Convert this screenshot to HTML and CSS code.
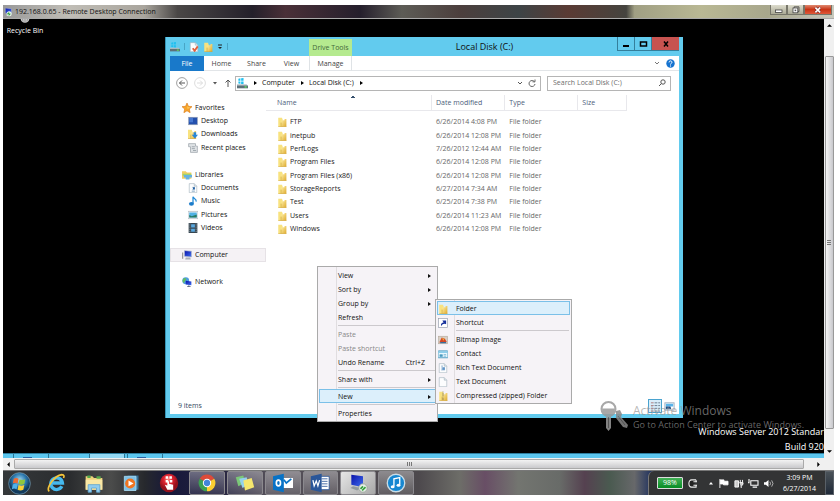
FILE: index.html
```html
<!DOCTYPE html>
<html lang="en">
<head>
    <meta charset="UTF-8">
    <meta name="viewport" content="width=device-width, initial-scale=1.0">
    <title>192.168.0.65 - Remote Desktop Connection</title>
    <link rel="stylesheet" href="styles.css">
</head>
<body>
    <!-- Shared icons -->
    <svg class="defs" aria-hidden="true">
        <defs>
            <linearGradient id="gold" x2="1" y2="1"><stop stop-color="#fff0a8"/><stop offset="1" stop-color="#dda92c"/></linearGradient>
            <radialGradient id="orb" cx=".5" cy=".35"><stop stop-color="#a8dcf2"/><stop offset=".6" stop-color="#2c79ae"/><stop offset="1" stop-color="#123a5c"/></radialGradient>
            <radialGradient id="redball" cx=".45" cy=".3"><stop stop-color="#ff8a80"/><stop offset=".5" stop-color="#dd2230"/><stop offset="1" stop-color="#96101c"/></radialGradient>
            <linearGradient id="screen" x2="1" y2="1"><stop stop-color="#0a12a8"/><stop offset="1" stop-color="#3f6df0"/></linearGradient>
            <symbol id="folder" viewBox="0 0 16 16">
                <path d="M2 1h6l1 3v11.500H2z" fill="#f8e27f"/><path d="M7.500 5H12V3h3v12.500H7.500z" fill="url(#gold)"/><path d="M6.500 9v6.500" stroke="#c79d38"/><path d="M2 15.500h13" stroke="#d1a437"/>
            </symbol>
            <symbol id="drive" viewBox="0 0 16 16">
                <path d="M2 1l3-.5V4H2zM6 .4L9.500 0v4H6zM2 5h3v3.500L2 8zM6 5h3.500v4L6 8.600z" fill="#20c0f0"/><path d="M0 9h14l2 3H0z" fill="#b7c3ca"/><path d="M0 11h16v4H0z" fill="#5e7078"/><path d="M11 13h3" stroke="#5fe05f" stroke-width="2"/>
            </symbol>
            <symbol id="page" viewBox="0 0 16 16">
                <path d="M2 1h8l4 4v10.500H2z" fill="#fcfdfe" stroke="#a5b3bf"/><path d="M10 1v4h4" fill="#dde5eb" stroke="#a5b3bf"/>
            </symbol>
            <symbol id="monitor" viewBox="0 0 16 16">
                <path d="M1 4v10" stroke="#999" stroke-width="2"/><path d="M4 1l11 1v9L4 10z" fill="url(#screen)" stroke="#a9b3c8"/><path d="M6 12h7l1 3H5z" fill="#aab0b8"/>
            </symbol>
        </defs>
    </svg>

    <div class="host">
        <header class="host-title">
            <svg class="icon" viewBox="0 0 16 16"><use href="#monitor"/><circle cx="11" cy="11" r="4.500" fill="#e8f3e8"/><path d="M8 12l3-3M10 14l3-3" stroke="#279b36" stroke-width="2"/></svg>
            <span class="host-name">192.168.0.65 - Remote Desktop Connection</span>
            <div class="host-buttons">
                <button type="button" aria-label="Minimize"><svg viewBox="0 0 12 10"><rect x="2" y="5" width="8" height="3" fill="#fff" stroke="#444"/></svg></button>
                <button type="button" aria-label="Restore"><svg viewBox="0 0 12 10"><path d="M4 3V1h6v6H8" fill="none" stroke="#444"/><rect x="2.500" y="2.500" width="6" height="6" fill="#fff" stroke="#444"/><rect x="4.500" y="4.500" width="2" height="2" fill="#555"/></svg></button>
                <button type="button" class="host-close" aria-label="Close"><svg viewBox="0 0 12 10"><path d="M3 2l6 6M9 2L3 8" stroke="#722" stroke-width="3.500"/><path d="M3 2l6 6M9 2L3 8" stroke="#fff" stroke-width="2"/></svg></button>
            </div>
        </header>

        <div class="host-view">
            <main class="desktop">
                <div class="recycle">
                    <svg viewBox="0 0 20 8"><path d="M3 0h14c-1 4-3 6-7 6S4 4 3 0z" fill="#ccc"/><path d="M6 0l1 4M10 0v5M14 0l-1 4" stroke="#777"/></svg>
                    <span>Recycle Bin</span>
                </div>

                <!-- Explorer window -->
                <section class="window">
                    <div class="title-row">
                        <div class="quick">
                            <svg class="icon" viewBox="0 0 16 16"><use href="#drive"/></svg>
                            <i class="bar"></i>
                            <svg class="icon" viewBox="0 0 16 16"><use href="#page"/><path d="M6 10l3 4 5-7" fill="none" stroke="#e2603c" stroke-width="3"/></svg>
                            <svg class="icon" viewBox="0 0 16 16"><use href="#folder"/></svg>
                            <svg class="tiny" viewBox="0 0 6 6"><path d="M1 1h4" stroke="#222"/><path d="M1 3h4L3 5z" fill="#222"/></svg>
                            <i class="bar"></i>
                        </div>
                        <span class="drive-tools">Drive Tools</span>
                        <h1>Local Disk (C:)</h1>
                        <div class="win-buttons">
                            <button type="button" aria-label="Minimize"><svg viewBox="0 0 12 12"><path d="M3 8h6" stroke="#000" stroke-width="2"/></svg></button>
                            <button type="button" aria-label="Maximize"><svg viewBox="0 0 12 12"><rect x="3.500" y="4" width="6" height="4" fill="none" stroke="#000" stroke-width="1.500"/></svg></button>
                            <button type="button" class="win-close" aria-label="Close"><svg viewBox="0 0 12 12"><path d="M4 3.500l4 5M8 3.500l-4 5" stroke="#000" stroke-width="1.500"/></svg></button>
                        </div>
                    </div>

                    <nav class="tabs">
                        <button type="button" class="file">File</button>
                        <button type="button">Home</button>
                        <button type="button">Share</button>
                        <button type="button">View</button>
                        <button type="button" class="manage">Manage</button>
                        <span class="grow"></span>
                        <svg class="tiny" viewBox="0 0 6 6"><path d="M1 2l2 2 2-2" fill="none" stroke="#777"/></svg>
                        <svg class="help" viewBox="0 0 10 10"><circle cx="5" cy="5" r="4.700" fill="#1673cf"/><path d="M3.400 3.800c0-2.300 3.400-2.100 3.200 0C6.500 4.800 5 4.800 5 6.200M5 7.200v1.200" fill="none" stroke="#fff" stroke-width="1.100"/></svg>
                    </nav>

                    <div class="address-row">
                        <svg class="round" viewBox="0 0 12 12"><circle cx="6" cy="6" r="5.400" fill="#fff" stroke="#888" stroke-width=".8"/><path d="M9 6H3.500M6 3.500L3.500 6 6 8.500" fill="none" stroke="#555"/></svg>
                        <svg class="round" viewBox="0 0 12 12"><circle cx="6" cy="6" r="5.400" fill="#fff" stroke="#ddd"/><path d="M3 6h5.500M6 3.500L8.500 6 6 8.500" fill="none" stroke="#ddd"/></svg>
                        <svg class="tiny" viewBox="0 0 6 6"><path d="M1 2h4L3 4.500z" fill="#555"/></svg>
                        <svg class="up" viewBox="0 0 8 10"><path d="M4 9V2M1.500 4.500L4 2l2.500 2.500" fill="none" stroke="#555"/></svg>
                        <div class="address">
                            <svg class="icon" viewBox="0 0 16 16"><use href="#drive"/></svg>
                            <svg class="tri" viewBox="0 0 4 6"><path d="M1 1l3 2-3 2z"/></svg>
                            <a href="#">Computer</a>
                            <svg class="tri" viewBox="0 0 4 6"><path d="M1 1l3 2-3 2z"/></svg>
                            <a href="#">Local Disk (C:)</a>
                            <svg class="tri" viewBox="0 0 4 6"><path d="M1 1l3 2-3 2z"/></svg>
                            <span class="grow"></span>
                            <svg class="tiny" viewBox="0 0 6 6"><path d="M1 2l2 2 2-2" fill="none" stroke="#555"/></svg>
                            <svg class="up" viewBox="0 0 8 10"><path d="M6.500 3.800A3 3 0 1 0 7 6M4.500 3.800H7V1.500" fill="none" stroke="#666"/></svg>
                        </div>
                        <label class="search">
                            <input type="text" placeholder="Search Local Disk (C:)" aria-label="Search Local Disk (C:)">
                            <svg class="up" viewBox="0 0 8 10"><circle cx="5" cy="4" r="2.200" fill="none" stroke="#555"/><path d="M3.500 5.500L1 8" stroke="#555"/></svg>
                        </label>
                    </div>

                    <div class="content">
                        <ul class="tree">
                            <li><a href="#"><svg class="icon" viewBox="0 0 16 16"><path d="M8 0l2.300 5.300 5.700.500-4.300 3.800L13 15.500 8 12.400 3 15.500l1.300-5.900L0 5.800l5.700-.500z" fill="#f8a52a" stroke="#d97a18"/><path d="M8 3l1.300 4H13L9 9z" fill="#ffdf7a"/></svg>Favorites</a></li>
                            <li><a class="sub" href="#"><svg class="icon" viewBox="0 0 16 16"><rect x="1" y="2" width="14" height="12" fill="#2450ad" stroke="#95a0b4"/><path d="M2 3h6v7H2z" fill="#4778d1"/></svg>Desktop</a></li>
                            <li><a class="sub" href="#"><svg class="icon" viewBox="0 0 16 16"><use href="#folder" x="-2"/><path d="M9 5h4v4h3l-5 6-5-6h3z" fill="#2786d8"/></svg>Downloads</a></li>
                            <li><a class="sub" href="#"><svg class="icon" viewBox="0 0 16 16"><path d="M1 1h11v4h3v10H4V6H1z" fill="#dfe3e6" stroke="#8e979e"/><path d="M6 6h5M6 9h5M8 12h5" stroke="#7d8890"/></svg>Recent places</a></li>
                            <li class="gap" aria-hidden="true"></li>
                            <li><a href="#"><svg class="icon" viewBox="0 0 16 16"><path d="M0 2h6l2 2h7v10H0z" fill="#f1ce62"/><path d="M1 6h14v3H1z" fill="#9cd36d"/><path d="M3 8h13v4H12v3H6v-3H3z" fill="#65b2e2"/></svg>Libraries</a></li>
                            <li><a class="sub" href="#"><svg class="icon" viewBox="0 0 16 16"><use href="#page"/><path d="M7 7h4M7 10h4M6 13h5" stroke="#3a6ea0"/><rect x="8" y="7" width="3" height="3" fill="#225fa3"/></svg>Documents</a></li>
                            <li><a class="sub" href="#"><svg class="icon" viewBox="0 0 16 16"><path d="M8 12V1c1 4 6 3 5 8" fill="none" stroke="#248bd8" stroke-width="2"/><ellipse cx="5.500" cy="12.500" rx="4" ry="3" fill="#1c7cca"/></svg>Music</a></li>
                            <li><a class="sub" href="#"><svg class="icon" viewBox="0 0 16 16"><rect x="0" y="2" width="16" height="12" fill="#eef3f6" stroke="#a9b4bb"/><path d="M2 4h12v8H2z" fill="#4fb1e4"/><path d="M2 8l4 2 8-3v5H2z" fill="#277b65"/></svg>Pictures</a></li>
                            <li><a class="sub" href="#"><svg class="icon" viewBox="0 0 16 16"><path d="M1 0h14v16H1z" fill="#374650"/><path d="M5 2h6v5H5zM5 9h6v5H5z" fill="#59a8df"/><path d="M3 1v14M13 1v14" stroke="#ccd6dc" stroke-dasharray="1.500"/></svg>Videos</a></li>
                            <li class="gap" aria-hidden="true"></li>
                            <li class="current"><a href="#"><svg class="icon" viewBox="0 0 16 16"><use href="#monitor"/></svg>Computer</a></li>
                            <li class="gap" aria-hidden="true"></li>
                            <li><a href="#"><svg class="icon" viewBox="0 0 16 16"><circle cx="6" cy="6" r="5.500" fill="#4f9de0"/><path d="M2 3c3-3 6 0 4 2S4 8 3 10C1 8 0 5 2 3z" fill="#62bd61"/><path d="M6 6l9 1v6l-9-1z" fill="url(#screen)"/><path d="M11 13v3M8 15.500h6" stroke="#235"/></svg>Network</a></li>
                        </ul>

                        <table class="files">
                            <thead>
                                <tr><th class="name">Name</th><th class="date">Date modified</th><th class="type">Type</th><th class="size">Size</th><th class="rest"></th></tr>
                            </thead>
                            <tbody>
                                <tr><td><svg class="icon"><use href="#folder"/></svg>FTP</td><td>6/26/2014 4:08 PM</td><td>File folder</td><td></td><td></td></tr>
                                <tr><td><svg class="icon"><use href="#folder"/></svg>inetpub</td><td>6/26/2014 12:08 PM</td><td>File folder</td><td></td><td></td></tr>
                                <tr><td><svg class="icon"><use href="#folder"/></svg>PerfLogs</td><td>7/26/2012 12:44 AM</td><td>File folder</td><td></td><td></td></tr>
                                <tr><td><svg class="icon"><use href="#folder"/></svg>Program Files</td><td>6/26/2014 12:08 PM</td><td>File folder</td><td></td><td></td></tr>
                                <tr><td><svg class="icon"><use href="#folder"/></svg>Program Files (x86)</td><td>6/26/2014 12:08 PM</td><td>File folder</td><td></td><td></td></tr>
                                <tr><td><svg class="icon"><use href="#folder"/></svg>StorageReports</td><td>6/27/2014 7:34 AM</td><td>File folder</td><td></td><td></td></tr>
                                <tr><td><svg class="icon"><use href="#folder"/></svg>Test</td><td>6/25/2014 7:38 PM</td><td>File folder</td><td></td><td></td></tr>
                                <tr><td><svg class="icon"><use href="#folder"/></svg>Users</td><td>6/26/2014 11:23 AM</td><td>File folder</td><td></td><td></td></tr>
                                <tr><td><svg class="icon"><use href="#folder"/></svg>Windows</td><td>6/26/2014 12:08 PM</td><td>File folder</td><td></td><td></td></tr>
                            </tbody>
                        </table>
                    </div>

                    <footer class="status">
                        <span>9 items</span>
                        <button type="button" class="view on" aria-label="Details"><svg viewBox="0 0 12 12"><path d="M1 2h3M1 5h3M1 8h3M1 11h3" stroke="#a77"/><path d="M5 2h3M9 2h2M5 5h3M9 5h2M5 8h3M9 8h2M5 11h3M9 11h2" stroke="#678"/></svg></button>
                        <button type="button" class="view" aria-label="Large icons"><svg viewBox="0 0 12 12"><rect x="1" y="2" width="10" height="8" fill="#fff" stroke="#9ab"/><path d="M2 3h8v3H2z" fill="#59b4ea"/><path d="M2 6h5l1 3H2z" fill="#1f4b83"/></svg></button>
                    </footer>
                </section>

                <!-- Context menus -->
                <div class="menu menu-main">
                    <button type="button">View<b></b></button>
                    <button type="button">Sort by<b></b></button>
                    <button type="button">Group by<b></b></button>
                    <button type="button">Refresh</button>
                    <hr>
                    <button type="button" disabled>Paste</button>
                    <button type="button" disabled>Paste shortcut</button>
                    <button type="button">Undo Rename<kbd>Ctrl+Z</kbd></button>
                    <hr>
                    <button type="button">Share with<b></b></button>
                    <hr>
                    <button type="button" class="hot">New<b></b></button>
                    <hr>
                    <button type="button">Properties</button>
                </div>
                <div class="menu menu-new">
                    <button type="button" class="hot"><svg class="icon"><use href="#folder"/></svg>Folder</button>
                    <button type="button"><svg class="icon" viewBox="0 0 16 16"><rect x="1" y="1" width="14" height="14" fill="#fff" stroke="#8f98a8"/><path d="M5 13c-1-4 1-6 4-6L7 4h6v6l-2-1c-3 0-4 1-6 4z" fill="#16309c"/></svg>Shortcut</button>
                    <hr>
                    <button type="button"><svg class="icon" viewBox="0 0 16 16"><rect x="1" y="2" width="14" height="12" fill="#d8d0c5" stroke="#b5a89a"/><path d="M2 12l4-8 5 2 3 5z" fill="#d44625"/><path d="M4 11h9v2H3z" fill="#396d9d"/><path d="M6 5l4 1-1 3z" fill="#f0b43c"/></svg>Bitmap image</button>
                    <button type="button"><svg class="icon" viewBox="0 0 16 16"><rect y="3" width="16" height="11" rx="1" fill="#e8f7fd" stroke="#4c9bc0" stroke-width="1.500"/><path d="M1 5h14" stroke="#6fc1e4" stroke-width="2"/><path d="M3 9h4v3H3zM9 9h4M9 11.500h4" fill="#4a9bc2" stroke="#4a9bc2"/></svg>Contact</button>
                    <button type="button"><svg class="icon" viewBox="0 0 16 16"><use href="#page"/><path d="M5 5h3M5 8h6M5 11h6" stroke="#5787b8"/><rect x="7" y="7" width="4" height="4" fill="#6094c7"/></svg>Rich Text Document</button>
                    <button type="button"><svg class="icon"><use href="#page"/></svg>Text Document</button>
                    <button type="button"><svg class="icon" viewBox="0 0 16 16"><use href="#folder"/><path d="M8 1v14" stroke="#6d6142" stroke-width="2" stroke-dasharray="1"/></svg>Compressed (zipped) Folder</button>
                </div>

                <div class="activate">
                    <svg viewBox="0 0 28 30"><circle cx="8.500" cy="8" r="7" fill="none" stroke="#999" stroke-width="2"/><path d="M2 7.500h13c0 4-2 6-4 7V27l-2.500 3L6 27V14.500c-2-1-4-3-4-7z" fill="#999"/><path d="M16 10l4-1 2 4-1 3 7 8-1 3-4-1-7-9v-3z" fill="#888"/><path d="M8.500 16v11M18 15l7 9" stroke="#555" stroke-width=".8"/></svg>
                    <div>
                        <p class="activate-head">Activate Windows</p>
                        <p>Go to Action Center to activate Windows.</p>
                    </div>
                </div>
                <div class="edition">
                    <p>Windows Server 2012 Standar</p>
                    <p>Build 920</p>
                </div>
                <div class="remote-taskbar"><i></i><i></i><i></i><i></i></div>
            </main>

            <div class="vscroll">
                <svg class="tri" viewBox="0 0 6 4"><path d="M0 4l3-3 3 3z"/></svg>
                <i class="thumb"></i>
                <svg class="tri" viewBox="0 0 6 4"><path d="M0 0l3 3 3-3z"/></svg>
            </div>
        </div>

        <div class="hscroll">
            <svg class="tri" viewBox="0 0 4 6"><path d="M4 0L1 3l3 3z"/></svg>
            <i class="thumb"></i>
            <svg class="tri" viewBox="0 0 4 6"><path d="M0 0l3 3-3 3z"/></svg>
        </div>

        <!-- Local taskbar -->
        <footer class="taskbar">
            <div class="apps">
                <button type="button" aria-label="Start"><svg viewBox="0 0 24 24"><circle cx="12" cy="12" r="11.300" fill="url(#orb)" stroke="#7fa5b8" stroke-width=".7"/><path d="M6 7c2-1 3-1 5 0l-1 5c-2-1-3-1-5 0z" fill="#ef6b33"/><path d="M12 7.500c2 1 4 1 6 0l-1 5c-2 1-4 1-6 0z" fill="#8fc63d"/><path d="M5 13c2-1 3-1 5 0l-1 5c-2-1-3-1-5 0z" fill="#4fb1ea"/><path d="M11 13.500c2 1 4 1 6 0l-1 5c-2 1-4 1-6 0z" fill="#fcd035"/></svg></button>
                <button type="button" aria-label="Internet Explorer"><svg viewBox="0 0 24 24"><path d="M19 16a7 7 0 1 1 .7-4H7" fill="none" stroke="#45b9ee" stroke-width="4"/><path d="M4 22c-5-3 6-19 15-20 3 0 3 2 2 4" fill="none" stroke="#f5c53a" stroke-width="2"/></svg></button>
                <button type="button" aria-label="Windows Explorer"><svg viewBox="0 0 24 24"><path d="M2 4h8l2 2h10v14H2z" fill="#efd27c"/><path d="M4 3h4v3H4zM15 4h5v3h-5z" fill="#54a94b"/><path d="M2 8h20v12H2z" fill="#fae8a5"/><path d="M5 23v-9h14v9h-4v-5H9v5z" fill="#91cdef" stroke="#5ea4d0"/></svg></button>
                <button type="button" aria-label="Media Player"><svg viewBox="0 0 24 24"><path d="M8 3h13v17H8z" fill="#366f95"/><path d="M4 4h14v17H4z" fill="#7fc2e8" stroke="#a9dcf4"/><circle cx="11" cy="12.500" r="6" fill="#ef7420"/><path d="M9 9l6 3.500L9 16z" fill="#fff"/></svg></button>
                <button type="button" aria-label="Touch"><svg viewBox="0 0 24 24"><circle cx="12" cy="12" r="11" fill="url(#redball)"/><path d="M8 4h3v3H8zM12.500 4h3v3h-3zM8 8.500h3v3H8zM13 8.500h3v3h-3z" fill="#fff"/><path d="M10 20l-3-6 3 1v-5h2v3l5 1v6z" fill="#fff"/></svg></button>
                <button type="button" class="open" aria-label="Chrome"><svg viewBox="0 0 24 24"><path d="M12 12L3.300 7A10 10 0 0 1 20.700 7z" fill="#dd4b39"/><path d="M12 12l8.700-5A10 10 0 0 1 12 22z" fill="#fccf31"/><path d="M12 12v10A10 10 0 0 1 3.300 7z" fill="#3ca151"/><circle cx="12" cy="12" r="5" fill="#fff"/><circle cx="12" cy="12" r="3.800" fill="#4285d8"/></svg></button>
                <button type="button" class="open" aria-label="Sticky Notes"><svg viewBox="0 0 24 24"><path d="M1 5l9-2 2 9-8 4z" fill="#7bc878"/><path d="M5 7l9-2 2 9-7 4z" fill="#94d1ed"/><path d="M10 9l10-3 3 11-11 4z" fill="#f6e76e"/></svg></button>
                <button type="button" class="open" aria-label="Outlook"><svg viewBox="0 0 24 24"><path d="M12 6h12v12H12z" fill="#fff"/><path d="M13 8l3 4 6-5" fill="none" stroke="#0872c6" stroke-width="2"/><path d="M0 4l13-3v22L0 20z" fill="#0872c6"/><ellipse cx="6.500" cy="12" rx="2.500" ry="3.500" fill="none" stroke="#fff" stroke-width="2"/></svg></button>
                <button type="button" class="open" aria-label="Word"><svg viewBox="0 0 24 24"><path d="M12 4h11v16H12z" fill="#fff" stroke="#2a5699"/><path d="M14 7h7M14 10h7M14 13h7M14 16h7" stroke="#2a5699"/><path d="M1 4l13-3v22L1 20z" fill="#2a5699"/><path d="M3.500 8.500l1.500 7 2.500-6 2 6 2-7" fill="none" stroke="#fff" stroke-width="1.500"/></svg></button>
                <button type="button" class="open active" aria-label="Remote Desktop"><svg viewBox="0 0 24 24"><path d="M4 2l14 2v13L4 14z" fill="url(#screen)"/><path d="M6 16l9 2-4 3-8-3z" fill="#929a9e"/><circle cx="18" cy="18" r="5" fill="#e8eee8" stroke="#9aa69a"/><path d="M15 19l3-3M17 21l4-4" stroke="#34a23c" stroke-width="2"/></svg></button>
                <button type="button" class="open" aria-label="iTunes"><svg viewBox="0 0 24 24"><circle cx="12" cy="12" r="10.500" fill="#1687d1" stroke="#c9dce6" stroke-width="1.600"/><path d="M9.500 16V7l7-1.500V14" fill="none" stroke="#fff" stroke-width="1.600"/><ellipse cx="8" cy="16.500" rx="2.300" ry="1.800" fill="#fff"/><ellipse cx="15" cy="14.700" rx="2.300" ry="1.800" fill="#fff"/></svg></button>
            </div>
            <div class="tray">
                <span class="battery">98%</span>
                <svg class="plug" viewBox="0 0 12 10"><path d="M10 1H5C1 1 1 9 5 9h5V7H7.500M7.500 3H10V1M7 3h4M7 7h4" fill="#222" stroke="#eee" stroke-width="1.200"/></svg>
                <svg class="tiny" viewBox="0 0 6 6"><path d="M1 4.500h4L3 2z" fill="#fff"/></svg>
                <svg class="plug" viewBox="0 0 12 10"><path d="M2 0v10M2.500 1h4v1.500H11V6.500H6V5.500H2.500z" fill="#fff" stroke="#fff"/></svg>
                <svg class="plug" viewBox="0 0 12 10"><path d="M2 2h4v7H2zM8 1v3M10.500 1v3M7 4h4v2L9 8v2" fill="#ccc" stroke="#fff"/></svg>
                <svg class="plug" viewBox="0 0 12 10"><path d="M3 2h8v5H3zM5 9h5M1 0v4H0" fill="#333" stroke="#fff" stroke-width="1.200"/></svg>
                <svg class="plug" viewBox="0 0 12 10"><path d="M1 3.500h2L6 1v8L3 6.500H1z" fill="#fff"/><path d="M7.500 3q1.500 2 0 4M9.500 1.500q3 3.500 0 7" fill="none" stroke="#ddd" stroke-width=".8"/></svg>
                <time>3:09 PM<br>6/27/2014</time>
                <i class="peek"></i>
            </div>
        </footer>
    </div>
</body>
</html>
```

FILE: styles.css
```css
* {
    box-sizing: border-box;
}
body {
    margin: 0;
    background: #fff;
    color: #111;
    font-family: "Segoe UI", "Open Sans", "Noto Sans", sans-serif;
    font-size: 7px;
    line-height: 12px;
}
button, input, kbd {
    font: inherit;
    color: inherit;
    margin: 0;
    padding: 0;
    border: 0;
    background: none;
}
p, h1, ul {
    margin: 0;
    padding: 0;
    list-style: none;
}
a {
    color: inherit;
    text-decoration: none;
}
svg {
    display: block;
    flex: none;
}
.defs {
    position: absolute;
    width: 0;
    height: 0;
}
.icon {
    width: 10px;
    height: 10px;
}
.tiny {
    width: 6px;
    height: 6px;
}
.grow {
    flex: 1;
}

/* Connection window */
.host {
    display: flex;
    flex-direction: column;
    height: 100vh;
    padding: 5px 6px 6px 3px;
}
.host-title {
    display: flex;
    align-items: center;
    gap: 3px;
    height: 14px;
    border-bottom: 1px solid #aaa;
    background: linear-gradient(90deg, #999 0, #c0bdb6 8%, #a9a59d 17%, #4a4746 21%, #24202a 30%, #4a3038 34%, #251f2c 43%, #5d5c56 48%, #4c3f3d 55%, #3d4446 62%, #5a3b34 68%, #45443f 75%, #a09f83 76%, #b9b894 84%, #a8a78c 92%, #c9c9bd 100%);
}
.host-title .icon {
    width: 9px;
}
.host-name {
    flex: 1;
}
.host-buttons {
    display: flex;
    align-self: flex-start;
    margin-right: 2px;
}
.host-buttons button {
    width: 17px;
    height: 10px;
    border: 1px solid #77766a;
    border-top: 0;
    background: linear-gradient(#dddccd, #aaa995);
}
.host-buttons .host-close {
    width: 28px;
    background: linear-gradient(#e08a70, #c83416 50%, #e0593a);
}
.host-buttons svg {
    height: 8px;
    margin: auto;
}
.host-view {
    display: flex;
    flex: 1;
    min-height: 0;
}
.desktop {
    position: relative;
    flex: 1;
    overflow: hidden;
    background: #000;
}
.recycle {
    display: flex;
    flex-direction: column;
    align-items: center;
    gap: 1px;
    width: 44px;
    color: #fff;
}
.recycle svg {
    width: 16px;
    height: 5px;
}

/* Explorer */
.window {
    position: absolute;
    left: 162px;
    top: 18px;
    display: flex;
    flex-direction: column;
    width: 518px;
    height: 381px;
    padding: 0 4px 4px 4px;
    background: #62cbee;
    border-left: 1px solid #3794b5;
}
.title-row {
    display: flex;
    height: 19px;
}
.quick {
    display: flex;
    align-items: center;
    gap: 4px;
    width: 139px;
}
.bar {
    width: 1px;
    height: 7px;
    background: #49a5c6;
}
.drive-tools {
    width: 43px;
    margin-top: 2px;
    background: #b5ea8f;
    color: #44693a;
    line-height: 17px;
    text-align: center;
}
.title-row h1 {
    flex: 1;
    font-size: 9px;
    font-weight: 400;
    line-height: 19px;
    text-align: center;
}
.win-buttons {
    display: flex;
}
.win-buttons button {
    width: 17px;
    height: 14px;
    border: 1px solid #347f9c;
    border-top: 0;
    border-right: 0;
}
.win-buttons .win-close {
    width: 28px;
    background: #c75350;
}
.win-buttons svg {
    height: 12px;
    margin: auto;
}
.tabs {
    display: flex;
    align-items: center;
    height: 15px;
    background: #fff;
    border-bottom: 1px solid #e2e5e8;
    color: #444;
}
.tabs button {
    width: 35px;
    height: 15px;
    padding-top: 1px;
}
.tabs .file {
    width: 34px;
    background: #1979ca;
    color: #fff;
}
.tabs .manage {
    width: 43px;
    border: solid #dfe3e6;
    border-width: 0 1px;
}
.help {
    width: 9px;
    height: 9px;
    margin: 0 4px 0 6px;
}
.address-row {
    display: flex;
    align-items: center;
    height: 24px;
    padding: 0 8px 0 6px;
    gap: 6px;
    background: #fff;
}
.round {
    width: 12px;
    height: 12px;
}
.up {
    width: 8px;
    height: 10px;
}
.address, .search {
    display: flex;
    align-items: center;
    height: 15px;
    border: 1px solid #b5b5b5;
}
.address {
    flex: 1;
    gap: 5px;
    margin-left: -3px;
    padding: 0 4px 0 1px;
}
.address .tri {
    width: 4px;
    height: 6px;
}
.address .icon {
    width: 11px;
    height: 11px;
}
.search {
    width: 124px;
    padding: 0 4px 0 5px;
}
.search input {
    flex: 1;
    min-width: 0;
    outline: 0;
}
.search input::placeholder {
    color: #6d6d6d;
    opacity: 1;
}
.content {
    display: flex;
    flex: 1;
    align-items: flex-start;
    background: #fff;
}
.tree {
    display: grid;
    grid-template-rows: repeat(14, 1fr);
    width: 96px;
    height: 188px;
    margin-top: 6px;
}
.tree li {
    display: flex;
    align-items: center;
    padding-left: 12px;
}
.tree .current {
    background: #f5f2f5;
    border: 1px solid #e6e2e6;
    padding-left: 11px;
}
.tree a {
    display: flex;
    align-items: center;
    gap: 3px;
}
.tree .sub {
    padding-left: 6px;
}
.files {
    flex: 1;
    height: 141px;
    border-collapse: separate;
    border-spacing: 0;
    table-layout: fixed;
}
.files th {
    height: 16px;
    padding: 1px 4px 0;
    border: solid #e8e8ec;
    border-width: 0 1px 1px 0;
    color: #4c607a;
    font-weight: 400;
    text-align: left;
}
.files .name {
    width: 166px;
    padding-left: 11px;
    background: linear-gradient(#35506d, #35506d) 85px 2px / 4px 1px no-repeat, linear-gradient(#35506d, #35506d) 86px 1px / 2px 1px no-repeat;
}
.files .date, .files .type {
    width: 73px;
}
.files .size {
    width: 49px;
}
.files .rest {
    border: 0;
}
.files tbody::before {
    content: "";
    display: block;
    height: 4px;
}
.files td {
    padding: 0 4px;
    color: #666;
    white-space: nowrap;
}
.files td:first-child {
    padding-left: 11px;
    color: #222;
}
.files .icon {
    display: inline-block;
    margin-right: 3px;
    vertical-align: middle;
}
.status {
    display: flex;
    align-items: center;
    height: 19px;
    padding: 3px 3px 0 8px;
    background: #fff;
    color: #34495e;
}
.status span {
    flex: 1;
}
.view {
    width: 14px;
    height: 14px;
    border: 1px solid transparent;
}
.view.on {
    border-color: #4aa3cf;
    background: #d9eefa;
}
.view svg {
    height: 11px;
    margin: auto;
}

/* Menus */
.menu {
    position: absolute;
    padding: 1px;
    border: 1px solid #aaa;
    background: linear-gradient(90deg, transparent 18px, #e0dde0 18px, #e0dde0 19px, transparent 19px) #f6f3f7;
}
.menu-main {
    left: 314px;
    top: 247px;
    width: 121px;
}
.menu-new {
    left: 432px;
    top: 280px;
    width: 137px;
}
.menu button {
    display: flex;
    align-items: center;
    width: 100%;
    height: 14px;
    padding: 1px 5px 0 19px;
    text-align: left;
}
.menu button:disabled {
    color: #888;
}
.menu .hot {
    background: #dceffb;
    box-shadow: inset 0 0 0 1px #7bc0e8;
}
.menu b {
    margin-left: auto;
    border: 2px solid transparent;
    border-left: 3px solid #111;
    border-right: 0;
}
.menu kbd {
    margin-left: auto;
    margin-right: 6px;
}
.menu hr {
    height: 1px;
    margin: 1px 1px 1px 19px;
    border: 0;
    background: #ccc9cd;
}
.menu-new button {
    gap: 8px;
    padding-left: 1px;
}

/* Desktop watermarks */
.activate {
    position: absolute;
    left: 597px;
    top: 382px;
    display: flex;
    gap: 5px;
    color: rgba(150, 150, 150, .7);
    font-size: 9px;
    line-height: 14px;
    white-space: nowrap;
}
.activate svg {
    width: 28px;
    height: 30px;
    opacity: .85;
}
.activate .activate-head {
    padding-top: 3px;
    font-size: 12px;
}
.edition {
    position: absolute;
    right: 0;
    bottom: 4px;
    color: #fff;
    font-size: 9px;
    line-height: 15px;
    text-align: right;
    white-space: nowrap;
}
.remote-taskbar {
    position: absolute;
    left: 0;
    right: 0;
    bottom: 0;
    display: flex;
    gap: 2px;
    height: 5px;
    padding-left: 10px;
    background: #5cc6ee;
    border-top: 1px solid #2e7fa0;
}
.remote-taskbar i {
    width: 36px;
    border: solid #2c7594;
    border-width: 0 1px;
    background: linear-gradient(#2761a5, #2761a5) 9px 3px / 9px 2px no-repeat;
}
.remote-taskbar i:nth-child(2) {
    border: 0;
    background: none;
}
.remote-taskbar i:nth-child(3) {
    background: #94d9f3;
}

/* Scrollbars */
.vscroll, .hscroll {
    display: flex;
    align-items: center;
    background: #f0f0f0;
}
.vscroll {
    flex-direction: column;
    justify-content: space-between;
    width: 10px;
    padding: 4px 0;
}
.vscroll .tri {
    width: 5px;
    height: 4px;
}
.vscroll .thumb {
    flex: 1;
    width: 9px;
    margin: 29px 0 21px;
    border: 1px solid #999;
    border-radius: 1px;
    background: repeating-linear-gradient(#777 0 1px, transparent 1px 2px) center / 4px 5px no-repeat, linear-gradient(90deg, #f5f5f5, #c8c8cc);
}
.hscroll {
    height: 12px;
    padding: 0 13px 0 3px;
}
.hscroll .tri {
    width: 4px;
    height: 5px;
}
.hscroll .thumb {
    flex: 1;
    height: 10px;
    margin: 0 13px 0 4px;
    border: 1px solid #aaa;
    border-radius: 1px;
    background: repeating-linear-gradient(90deg, #777 0 1px, transparent 1px 2px) center / 5px 4px no-repeat, linear-gradient(#f3f3f3, #c9c9cc);
}

/* Taskbar */
.taskbar {
    display: flex;
    justify-content: space-between;
    height: 25px;
    border-top: 1px solid #777;
    background: linear-gradient(90deg, #35393b 0, #2a2c2e 8%, #4b4c4b 13%, #27292d 17%, #17183a 20%, #24223f 26%, #55505a 32%, #4d494d 50%, #6d6d68 55%, #684e65 58%, #737570 62%, #686b68 67%, #554150 70%, #4a5a50 73%, #67686a 76%, #23345f 78%, #1f2f5c 80%, #3b3c3d 82%);
}
.apps {
    display: grid;
    grid-template-columns: 33px repeat(10, 1fr);
    gap: 2px;
    width: 411px;
}
.apps svg {
    height: 20px;
    margin: auto;
}
.apps button:first-child svg {
    height: 23px;
}
.apps .open {
    border: 1px solid #8b898e;
    border-radius: 2px;
    background: linear-gradient(rgba(255, 255, 255, .35), rgba(255, 255, 255, .1));
}
.apps .active {
    background: linear-gradient(135deg, #e6e6e6, #a8a8a8);
}
.tray {
    display: flex;
    align-items: center;
    gap: 4px;
    width: 186px;
    padding-left: 8px;
    border-left: 1px solid #777;
    border-radius: 6px 0 0 0;
    background: #333435;
    color: #fff;
}
.battery {
    width: 26px;
    height: 12px;
    border: 1px solid #ddd;
    border-radius: 1px;
    background: linear-gradient(#43b157, #078c24);
    line-height: 10px;
    text-align: center;
}
.plug {
    width: 11px;
    height: 9px;
}
.tray .tiny {
    margin-left: 6px;
}
.tray time {
    flex: 1;
    line-height: 11px;
    text-align: center;
}
.peek {
    align-self: stretch;
    width: 9px;
    border: 1px solid #596067;
    background: linear-gradient(#4a5258, #202a38);
}
```
